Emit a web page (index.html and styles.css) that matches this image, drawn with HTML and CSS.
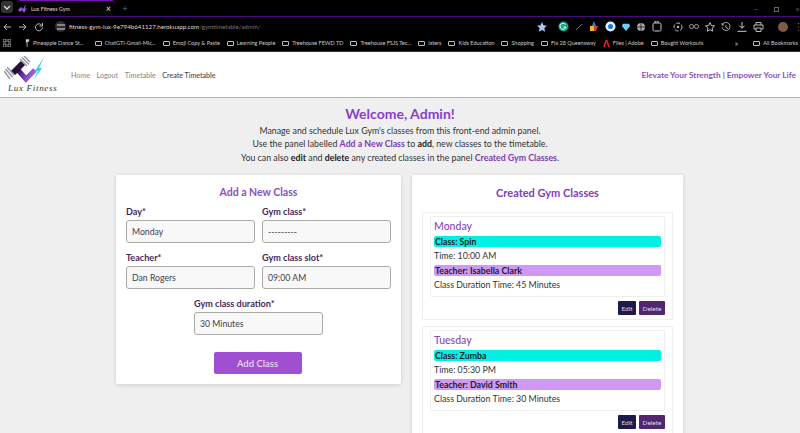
FILE: index.html
```html
<!DOCTYPE html>
<html lang="en">
<head>
	<meta charset="utf-8">
	<title>Lux Fitness Gym</title>
	<link rel="stylesheet" href="styles.css">
</head>
<body>
	<div class="browser">
		<div class="tabstrip">
			<span class="tab-menu">
				<svg width="8" height="8" viewBox="0 0 8 8"><path d="M1 3l3 3 3-3" fill="none" stroke="#ddd" stroke-width="1.3"/></svg>
			</span>
			<div class="tab">
				<svg width="9" height="9" viewBox="0 0 9 9"><path d="M0 6l3-3 2 2 3-5-1 5 2-1-3 5-2-3-2 2z" fill="#8f52d8"/></svg>
				<span class="tab-title">Lux Fitness Gym</span>
				<span class="tab-close">&times;</span>
			</div>
			<span class="tab-new">+</span>
			<div class="win-btns">
				<span>&minus;</span>
				<span class="win-max"></span>
				<span>&times;</span>
			</div>
		</div>
		<div class="toolbar">
			<svg class="tool" width="10" height="10" viewBox="0 0 10 10"><path d="M9 5H2M5 2L2 5l3 3" fill="none" stroke="#bbb" stroke-width="1"/></svg>
			<svg class="tool" width="10" height="10" viewBox="0 0 10 10"><path d="M1 5h7M5 2l3 3-3 3" fill="none" stroke="#bbb" stroke-width="1"/></svg>
			<svg class="tool" width="10" height="10" viewBox="0 0 10 10"><path d="M8 3.500A3.500 3.500 0 1 0 8.500 5.500M8.500 1v3h-3" fill="none" stroke="#bbb" stroke-width="1"/></svg>
			<span class="site-info">
				<svg width="8" height="8" viewBox="0 0 8 8"><path d="M0 2h8M0 6h8" stroke="#ddd" stroke-width="1.200"/></svg>
			</span>
			<div class="url"><span class="url-host">fitness-gym-lux-9e794b641127.herokuapp.com</span><span class="url-path">/gymtimetable/admin/</span></div>
			<div class="ext-icons">
				<svg width="10" height="10" viewBox="0 0 10 10"><path d="M5 0l1.500 3.300 3.500.4-2.600 2.400.7 3.600L5 7.900 1.900 9.700l.7-3.600L0 3.700l3.500-.4z" fill="#a8c7fa"/></svg>
				<svg class="ext-gap" width="11" height="11" viewBox="0 0 11 11"><circle cx="5.500" cy="5.500" r="5" fill="#15a37f"/><path d="M7.500 3.500a3 3 0 1 0 .5 2.500H5.500" fill="none" stroke="#fff" stroke-width="1"/></svg>
				<svg width="8" height="8" viewBox="0 0 8 8"><path d="M1 7l6-6" stroke="#777" stroke-width="1"/></svg>
				<svg width="10" height="11" viewBox="0 0 10 11"><path d="M5 0l2 5H3z" fill="#2f7fe0"/><path d="M1 5h4v5H1z" fill="#f0c020"/><path d="M5 5h4l-2 5H5z" fill="#d8324a"/></svg>
				<svg width="11" height="11" viewBox="0 0 11 11"><circle cx="5.500" cy="5.500" r="5" fill="#e8f0fe"/><circle cx="5.500" cy="5.500" r="2.500" fill="#1a73e8"/></svg>
				<svg width="8" height="8" viewBox="0 0 10 10"><path d="M1 1h8l1 3-5 6-5-6z" fill="#6fd0f5"/></svg>
				<svg width="10" height="10" viewBox="0 0 10 10"><circle cx="5" cy="5" r="4" fill="#aaa"/><path d="M5 0v10M0 5h10" stroke="#000" stroke-width=".7"/></svg>
				<svg width="10" height="11" viewBox="0 0 10 11"><rect x="1" y="2" width="8" height="8" rx="1.500" fill="none" stroke="#ccc"/><path d="M3 2V0h3v2" fill="none" stroke="#ccc"/></svg>
				<svg class="ext-gap" width="10" height="10" viewBox="0 0 10 10"><circle cx="5" cy="5" r="4" fill="none" stroke="#bbb" stroke-dasharray="4 1.500"/><circle cx="5" cy="5" r="1.200" fill="#bbb"/></svg>
				<svg width="10" height="7" viewBox="0 0 12 8"><circle cx="3" cy="4" r="2.500" fill="none" stroke="#bbb"/><circle cx="9" cy="4" r="2.500" fill="none" stroke="#bbb"/></svg>
				<svg width="10" height="10" viewBox="0 0 10 10"><path d="M5 .500l1.300 3 3.200.3-2.400 2.200.7 3.200L5 7.600 2.200 9.200l.7-3.200L.5 3.800l3.200-.3z" fill="none" stroke="#bbb"/></svg>
				<svg width="10" height="10" viewBox="0 0 10 10"><path d="M1.500 2.500A4 4 0 1 1 1 5M1 1v2h2M5 3v2.500l2 1" fill="none" stroke="#bbb" stroke-width=".9"/></svg>
				<svg width="10" height="10" viewBox="0 0 10 10"><path d="M5 0v6M2.500 3.800L5 6.300l2.500-2.500M.5 9.300h9" fill="none" stroke="#ccc" stroke-width="1"/></svg>
				<svg width="11" height="10" viewBox="0 0 11 10"><path d="M3 3V.5h5V3M3 7H1V3h9v4H8M3 6h5v3.500H3z" fill="none" stroke="#ccc" stroke-width=".9"/></svg>
				<span class="avatar"></span>
				<svg width="3" height="10" viewBox="0 0 3 10"><path d="M1.500 1v.5M1.500 4.700v.5M1.500 8.500V9" stroke="#ccc" stroke-width="1.300"/></svg>
			</div>
		</div>
		<div class="bookmarks">
			<svg class="apps" width="8" height="8" viewBox="0 0 8 8"><path d="M0 0h3v3H0zM5 0h3v3H5zM0 5h3v3H0zM5 5h3v3H5z" fill="none" stroke="#bbb" stroke-width=".8"/></svg>
			<span class="bm bm-pine"><svg width="5" height="8" viewBox="0 0 6 9"><path d="M1 0h4v3H3v6H2V4H1z" fill="#ccc"/></svg>Pineapple Dance St...</span>
			<span class="bm"><i class="folder"></i>ChatGTI-Gmail-Mic...</span>
			<span class="bm"><i class="folder"></i>Emoji Copy &amp; Paste</span>
			<span class="bm"><i class="folder"></i>Learning People</span>
			<span class="bm"><i class="folder"></i>Treehouse FEWD TD</span>
			<span class="bm"><i class="folder"></i>Treehouse FSJS Tec...</span>
			<span class="bm"><i class="folder"></i>laters</span>
			<span class="bm"><i class="folder"></i>Kids Education</span>
			<span class="bm"><i class="folder"></i>Shopping</span>
			<span class="bm"><i class="folder"></i>Fix 28 Queensway</span>
			<span class="bm"><svg width="7" height="7" viewBox="0 0 7 7"><path d="M2.500 0L0 7h1.700L3.500 2 5.300 7H7L4.500 0z" fill="#e8141e"/></svg>Files | Adobe</span>
			<span class="bm"><i class="folder"></i>Bought Workouts</span>
			<span class="bm-more">&raquo;</span>
			<span class="bm bm-all"><i class="folder"></i>All Bookmarks</span>
		</div>
	</div>

	<header class="site-head">
		<div class="brand">
			<svg class="logo-mark" width="46" height="27" viewBox="0 0 46 27">
				<defs>
					<linearGradient id="checkFill" x1="0" y1="0" x2="1" y2="0.300">
						<stop offset="0" stop-color="#2a1036"/>
						<stop offset="0.600" stop-color="#7a3cc0"/>
						<stop offset="1" stop-color="#a06be0"/>
					</linearGradient>
				</defs>
				<path d="M40 1L31 15h3l-5 10 9-13h-3z" fill="#35d0f0"/>
				<path d="M13 13l9 10 9-9" fill="none" stroke="url(#checkFill)" stroke-width="5"/>
				<path d="M9 17L19 7" stroke="#2a1036" stroke-width="6"/>
				<path d="M16 3l7 7M18 1.500l7 7M20 0l6 6M3 11l7 8M1.500 13l7 8M0 15l6 8" stroke="#9a98a0" stroke-width="1.500"/>
			</svg>
			<span class="logo-text">Lux Fitness</span>
		</div>
		<nav class="nav">
			<a href="#">Home</a>
			<a href="#">Logout</a>
			<a href="#">Timetable</a>
			<a href="#" class="current">Create Timetable</a>
		</nav>
		<p class="tagline">Elevate Your Strength | Empower Your Life</p>
	</header>

	<main class="page">
		<h1>Welcome, Admin!</h1>
		<div class="intro">
			<p>Manage and schedule Lux Gym's classes from this front-end admin panel.</p>
			<p>Use the panel labelled <b class="hl">Add a New Class</b> to <b>add</b>, new classes to the timetable.</p>
			<p>You can also <b>edit</b> and <b>delete</b> any created classes in the panel <b class="hl">Created Gym Classes</b>.</p>
		</div>
		<div class="panels">
			<section class="panel panel-form">
				<h2>Add a New Class</h2>
				<form class="form-grid">
					<div class="field">
						<label>Day*</label>
						<div class="select">Monday</div>
					</div>
					<div class="field">
						<label>Gym class*</label>
						<div class="select">---------</div>
					</div>
					<div class="field">
						<label>Teacher*</label>
						<div class="select">Dan Rogers</div>
					</div>
					<div class="field">
						<label>Gym class slot*</label>
						<div class="select">09:00 AM</div>
					</div>
					<div class="field field-center">
						<label>Gym class duration*</label>
						<div class="select">30 Minutes</div>
					</div>
				</form>
				<div class="submit-row"><button type="button" class="btn-add">Add Class</button></div>
			</section>
			<section class="panel panel-list">
				<h2 class="list-title">Created Gym Classes</h2>
				<article class="entry">
					<div class="entry-body">
						<h3>Monday</h3>
						<p class="tag tag-class">Class: Spin</p>
						<p class="line">Time: 10:00 AM</p>
						<p class="tag tag-teacher">Teacher: Isabella Clark</p>
						<p class="line">Class Duration Time: 45 Minutes</p>
					</div>
					<div class="entry-actions">
						<button type="button" class="btn-edit">Edit</button>
						<button type="button" class="btn-del">Delete</button>
					</div>
				</article>
				<article class="entry">
					<div class="entry-body">
						<h3>Tuesday</h3>
						<p class="tag tag-class">Class: Zumba</p>
						<p class="line">Time: 05:30 PM</p>
						<p class="tag tag-teacher">Teacher: David Smith</p>
						<p class="line">Class Duration Time: 30 Minutes</p>
					</div>
					<div class="entry-actions">
						<button type="button" class="btn-edit">Edit</button>
						<button type="button" class="btn-del">Delete</button>
					</div>
				</article>
			</section>
		</div>
	</main>
</body>
</html>
```

FILE: styles.css
```css
* {
	box-sizing: border-box;
}
html, body {
	margin: 0;
	height: 433px;
	overflow: hidden;
}
body {
	font-family: Lato, "Liberation Sans", sans-serif;
	font-size: 11px;
	color: #333;
	background: #efefef;
}
p, h1, h2, h3 {
	margin: 0;
}

/* browser frame */
.browser {
	height: 52px;
	background: #000;
	color: #ccc;
	font-size: 5.500px;
}
.tabstrip {
	display: flex;
	align-items: flex-end;
	height: 17px;
	border-bottom: 1px solid #4c0a78;
	padding-left: 1px;
}
.tab-menu {
	display: flex;
	align-items: center;
	justify-content: center;
	width: 12px;
	height: 12px;
	margin: 0 3px 3px 0;
	border-radius: 3px;
	background: #333;
}
.tab {
	display: flex;
	align-items: center;
	gap: 3px;
	width: 98px;
	height: 16px;
	padding: 0 4px 0 1px;
	border-top: 1px solid #7a12b8;
	border-radius: 4px 4px 0 0;
	background: #050505;
	margin-left: 1px;
}
.tab-title {
	flex: 1;
	padding-left: 1px;
	font-size: 5.400px;
	color: #ddd;
}
.tab-close {
	font-size: 9px;
	color: #ddd;
}
.tab-new {
	margin: 0 0 2px 7px;
	font-size: 10px;
	color: #666;
}
.win-btns {
	display: flex;
	gap: 16px;
	margin: 0 0 2px auto;
	align-items: center;
	font-size: 8px;
	color: #666;
}
.win-max {
	width: 5px;
	height: 5px;
	border: 1px solid #666;
}
.toolbar {
	display: flex;
	align-items: center;
	height: 19px;
	padding: 0 0 0 2px;
}
.tool {
	margin-right: 6px;
}
.site-info {
	display: flex;
	align-items: center;
	justify-content: center;
	width: 11px;
	height: 11px;
	margin-left: 5px;
	border-radius: 50%;
	background: #2e2e2e;
}
.url {
	flex: 1;
	margin-left: 3px;
	font-size: 6.200px;
	white-space: nowrap;
}
.url-host {
	color: #ddd;
}
.url-path {
	color: #777;
}
.ext-icons {
	display: flex;
	align-items: center;
	gap: 6px;
}
.ext-gap {
	margin-left: 5px;
}
.avatar {
	width: 10px;
	height: 10px;
	margin: 0 3px 0 8px;
	border-radius: 50%;
	background: #7d5b4a;
}
.bookmarks {
	display: flex;
	align-items: center;
	height: 16px;
	padding: 0 0 1px 3px;
	white-space: nowrap;
	border-bottom: 1px solid #333;
}
.apps {
	margin-right: 14px;
}
.bm {
	display: flex;
	align-items: center;
	gap: 3px;
	margin-right: 7px;
}
.bm-pine {
	margin-right: 11px;
}
.bm-more {
	margin: 0 15px 0 auto;
	font-size: 8px;
}
.bm-all {
	margin-right: 2px;
}
.folder {
	width: 7px;
	height: 5px;
	border: 1px solid #bbb;
	border-radius: 1px;
}

/* site header */
.site-head {
	display: flex;
	align-items: center;
	height: 46px;
	padding: 0 4px 0 4px;
	background: #fff;
	border-bottom: 1px solid #bfa9d3;
}
.brand {
	display: flex;
	flex-direction: column;
	width: 67px;
}
.logo-text {
	margin: 1px 0 0 4px;
	font: italic 9px "Liberation Serif", serif;
	letter-spacing: .7px;
	color: #333;
	line-height: 9px;
}
.nav {
	display: flex;
	gap: 6.500px;
	padding-top: 1px;
	font-size: 7.100px;
	font-weight: 500;
}
.nav a {
	color: #8d8d8d;
	text-decoration: none;
}
.nav a.current {
	color: #4a4250;
}
.tagline {
	margin-left: auto;
	padding-top: 1px;
	font-size: 8.300px;
	font-weight: 700;
	color: #8e4fc0;
}

/* page */
.page {
	padding-top: 6px;
	text-align: center;
}
h1 {
	font-size: 14px;
	font-weight: 700;
	line-height: 19px;
	color: #8b3dc9;
}
.intro {
	margin-top: 1px;
	font-size: 8.800px;
	line-height: 13.400px;
}
.intro b {
	color: #222;
}
.intro .hl {
	color: #7d3cb5;
}
.panels {
	display: flex;
	gap: 11px;
	margin: 11px 117px 0 116px;
	align-items: flex-start;
}
.panel {
	background: #fff;
	border-radius: 2px;
	box-shadow: 0 1px 4px rgba(0, 0, 0, .14);
}
.panel-form {
	width: 285px;
	height: 209px;
	padding: 11px 10px 0;
}
.panel-list {
	width: 271px;
	padding: 11px 10px 0;
}
h2 {
	font-size: 10.500px;
	line-height: 13px;
	font-weight: 700;
	color: #8b4ec4;
}
.list-title {
	margin-bottom: 13px;
	font-size: 11px;
	color: #8140b8;
}
.form-grid {
	display: grid;
	grid-template-columns: 129px 129px;
	gap: 8px 7px;
	margin-top: 6px;
	text-align: left;
}
.field label {
	display: block;
	margin-bottom: 2px;
	font-size: 9.100px;
	line-height: 13px;
	font-weight: 700;
	color: #43285c;
}
.field-center {
	grid-column: 1 / 3;
	width: 129px;
	justify-self: center;
}
.select {
	height: 23px;
	padding: 0 5px;
	border: 1px solid #aaa;
	border-radius: 3px;
	background: #f8f8f8;
	font-size: 8.700px;
	line-height: 21px;
	color: #3f3f50;
}
.submit-row {
	margin-top: 17px;
	padding-right: 2px;
}
.btn-add {
	width: 88px;
	height: 22px;
	border: 0;
	border-radius: 2px;
	background: #a04fd2;
	color: #e6d8f2;
	font: 600 9.500px Lato, "Liberation Sans", sans-serif;
}
.entry {
	margin: 0 0 6px;
	padding: 3px 7px 4px;
	border: 1px solid #eee;
	background: #fff;
	text-align: left;
}
.entry-body {
	height: 81px;
	padding: 3px 3px;
	border: 1px solid #eee;
	border-radius: 2px;
}
h3 {
	margin-bottom: 3px;
	font-size: 10.500px;
	line-height: 13px;
	font-weight: 500;
	color: #8548bd;
}
.tag {
	height: 11px;
	padding-left: 1px;
	border-radius: 2px;
	font-size: 8.800px;
	line-height: 11px;
	font-weight: 700;
	color: #222;
}
.tag-class {
	background: #00f0e4;
}
.tag-teacher {
	background: #cf99f5;
}
.line {
	height: 18px;
	font-size: 8.800px;
	line-height: 18px;
	color: #333;
}
.entry-actions {
	display: flex;
	justify-content: flex-end;
	gap: 3px;
	margin: 4px 0 0;
}
.entry-actions button {
	height: 14px;
	padding: 0;
	border: 0;
	border-radius: 1px;
	color: #ddd;
	font: 6.500px Lato, "Liberation Sans", sans-serif;
}
.btn-edit {
	width: 18px;
	background: #1e1a4c;
}
.btn-del {
	width: 26px;
	background: #52276f;
}
```
